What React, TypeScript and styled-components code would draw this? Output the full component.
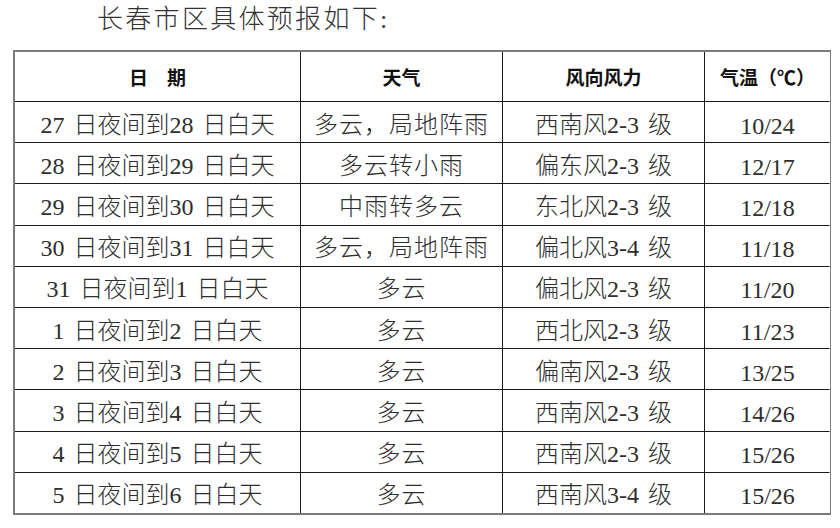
import React from "react";
import styled, { createGlobalStyle } from "styled-components";

type Row = {
  date: string;
  weather: string;
  wind: string;
  temp: string;
};

const rows: Row[] = [
  { date: "27 日夜间到28 日白天", weather: "多云，局地阵雨", wind: "西南风2-3 级", temp: "10/24" },
  { date: "28 日夜间到29 日白天", weather: "多云转小雨", wind: "偏东风2-3 级", temp: "12/17" },
  { date: "29 日夜间到30 日白天", weather: "中雨转多云", wind: "东北风2-3 级", temp: "12/18" },
  { date: "30 日夜间到31 日白天", weather: "多云，局地阵雨", wind: "偏北风3-4 级", temp: "11/18" },
  { date: "31 日夜间到1 日白天", weather: "多云", wind: "偏北风2-3 级", temp: "11/20" },
  { date: "1 日夜间到2 日白天", weather: "多云", wind: "西北风2-3 级", temp: "11/23" },
  { date: "2 日夜间到3 日白天", weather: "多云", wind: "偏南风2-3 级", temp: "13/25" },
  { date: "3 日夜间到4 日白天", weather: "多云", wind: "西南风2-3 级", temp: "14/26" },
  { date: "4 日夜间到5 日白天", weather: "多云", wind: "西南风2-3 级", temp: "15/26" },
  { date: "5 日夜间到6 日白天", weather: "多云", wind: "西南风3-4 级", temp: "15/26" },
];

const GlobalStyle = createGlobalStyle`
  html, body {
    margin: 0;
    padding: 0;
    background: #ffffff;
  }
  body {
    font-family: "Liberation Serif", "Noto Sans CJK SC", serif;
    color: #222222;
  }
`;

const App: React.FC = () => {
  return (
    <Page>
      <GlobalStyle />
      <Heading>长春市区具体预报如下:</Heading>
      <Table>
        <HeadCell>日　期</HeadCell>
        <HeadCell>天气</HeadCell>
        <HeadCell>风向风力</HeadCell>
        <HeadCell>气温（℃）</HeadCell>
        {rows.map((r, i) => (
          <React.Fragment key={i}>
            <Cell>{r.date}</Cell>
            <Cell $wide>{r.weather}</Cell>
            <Cell>{r.wind}</Cell>
            <Cell $low>{r.temp}</Cell>
          </React.Fragment>
        ))}
      </Table>
    </Page>
  );
};

export default App;

const Page = styled.div`
  width: 840px;
  height: 528px;
  overflow: hidden;
`;

const Heading = styled.h1`
  margin: 0;
  height: 50px;
  padding: 0 0 0 97px;
  box-sizing: border-box;
  font-family: "Liberation Serif", "Noto Sans CJK SC", serif;
  font-weight: 300;
  font-size: 26px;
  letter-spacing: 2.3px;
  line-height: 40px;
  color: #333333;
`;

const Table = styled.div`
  margin-left: 13px;
  width: 818px;
  box-sizing: border-box;
  display: grid;
  grid-template-columns: 285px 201px 201px 125px;
  grid-template-rows: 49px;
  grid-auto-rows: 40.2px;
  gap: 1px;
  background: #1a1a1a;
  border: 2px solid #7c7c7c;
`;

const HeadCell = styled.div`
  background: #ffffff;
  display: flex;
  align-items: center;
  justify-content: center;
  font-family: "Noto Sans CJK SC", sans-serif;
  font-weight: 700;
  font-size: 19px;
  color: #111111;
  white-space: pre;
`;

const Cell = styled.div<{ $low?: boolean; $wide?: boolean }>`
  background: #ffffff;
  display: flex;
  align-items: center;
  justify-content: center;
  box-sizing: border-box;
  padding-top: ${(p) => (p.$low ? "8px" : "0")};
  font-family: "Liberation Serif", "Noto Sans CJK SC", serif;
  font-weight: 300;
  font-size: 24px;
  word-spacing: 3px;
  letter-spacing: ${(p) => (p.$wide ? "1px" : "0")};
  color: #2e2e2e;
  white-space: pre;
`;
